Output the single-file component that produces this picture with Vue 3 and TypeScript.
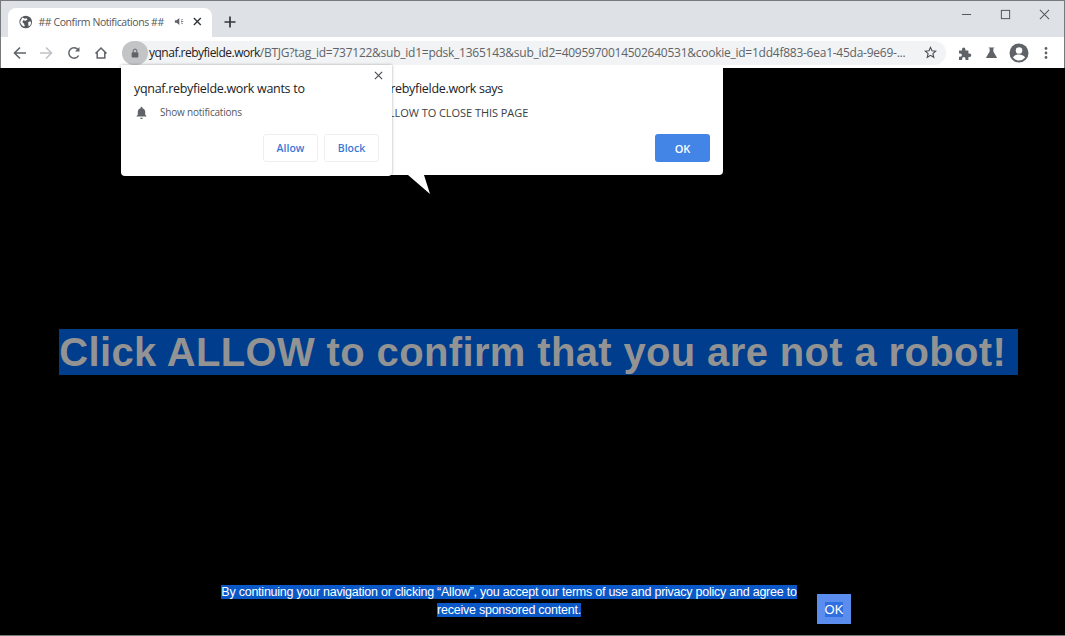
<script setup lang="ts">
const url = {
  host: 'yqnaf.rebyfielde.work',
  rest: '/BTJG?tag_id=737122&sub_id1=pdsk_1365143&sub_id2=4095970014502640531&cookie_id=1dd4f883-6ea1-45da-9e69-...'
}
</script>

<template>
  <div class="window">
    <header class="tabstrip">
      <div class="tab">
        <svg class="globe" viewBox="0 0 16 16" width="14" height="14"><circle cx="8" cy="8" r="7.5" fill="#54585d"/><path d="M4 2.500l3 1.500 2-.5 1 1.500-2 1.500-3-.5-1 2 2 2 1 3-1.500.5C3 12 1.500 10 1.500 7.500zM11 8l2.500-1 1 1.500-1 3.500-2 1.500-.5-3z" fill="#fff"/></svg>
        <span class="tab-title">## Confirm Notifications ##</span>
        <svg class="speaker" viewBox="0 0 12 12" width="11" height="11"><path d="M1 4.500h2L6 2v8L3 7.500H1z" fill="#5f6368"/><path d="M8 4.500l2-1M8 6h2.500M8 7.500l2 1" stroke="#5f6368" stroke-width=".9"/></svg>
        <svg class="tab-x" viewBox="0 0 10 10" width="9" height="9"><path d="M1 1l8 8M9 1l-8 8" stroke="#33363a" stroke-width="1.600"/></svg>
      </div>
      <svg class="new-tab" viewBox="0 0 12 12" width="12" height="12"><path d="M6 .5v11M.5 6h11" stroke="#33363a" stroke-width="1.700"/></svg>
      <div class="window-controls">
        <svg viewBox="0 0 12 12" width="11" height="11"><path d="M1 6h10" stroke="#55585c" stroke-width="1.100"/></svg>
        <svg viewBox="0 0 12 12" width="11" height="11"><rect x="1.500" y="1.500" width="9" height="9" fill="none" stroke="#55585c" stroke-width="1.100"/></svg>
        <svg viewBox="0 0 12 12" width="11" height="11"><path d="M1 1l10 10M11 1L1 11" stroke="#55585c" stroke-width="1.100"/></svg>
      </div>
    </header>

    <nav class="toolbar">
      <svg class="nav-back" viewBox="0 0 14 14" width="14" height="14"><path d="M13 7H2M7 1.500L1.500 7 7 12.500" fill="none" stroke="#5f6368" stroke-width="1.600"/></svg>
      <svg class="nav-fwd" viewBox="0 0 14 14" width="14" height="14"><path d="M1 7h11M7 1.500L12.500 7 7 12.500" fill="none" stroke="#c0c3c7" stroke-width="1.600"/></svg>
      <svg class="nav-reload" viewBox="0 0 14 14" width="14" height="14"><path d="M11.600 9.500A5.200 5.200 0 1 1 11 3.600" fill="none" stroke="#5f6368" stroke-width="1.500"/><path d="M12.500 1v4.500H8z" fill="#5f6368"/></svg>
      <svg class="nav-home" viewBox="0 0 14 14" width="14" height="14"><path d="M1.500 7.500L7 2l5.500 5.500M3.200 6.500V12h7.600V6.500" fill="none" stroke="#5f6368" stroke-width="1.500"/></svg>
      <div class="omnibox">
        <span class="lock">
          <svg viewBox="0 0 12 12" width="10" height="10"><rect x="2" y="5" width="8" height="6.500" rx="1" fill="#5f6368"/><path d="M3.800 5V3.500a2.200 2.200 0 0 1 4.400 0V5" fill="none" stroke="#5f6368" stroke-width="1.200"/></svg>
        </span>
        <span class="url"><span class="host">{{ url.host }}</span>{{ url.rest }}</span>
        <svg class="star" viewBox="0 0 14 14" width="13" height="13"><path d="M7 1.500l1.600 3.700 4 .4-3 2.600.9 3.900L7 10l-3.500 2.100.9-3.900-3-2.600 4-.4z" fill="none" stroke="#4a4d51" stroke-width="1.200"/></svg>
      </div>
      <svg class="ext" viewBox="0 0 14 14" width="14" height="14"><path d="M1 4.500h3V3.300a1.700 1.700 0 0 1 3.400 0v1.200h3v3h1.200a1.700 1.700 0 0 1 0 3.400h-1.200V14H7.500v-1.300a1.700 1.700 0 0 0-3.400 0V14H1v-3.200h1.200a1.700 1.700 0 0 0 0-3.400H1z" fill="#5f6368"/></svg>
      <svg class="flask" viewBox="0 0 14 14" width="13" height="13"><path d="M4 1.500h6v1H9v3.500l3.800 6.500v.5H1.200v-.5L5 6V2.500H4z" fill="#5f6368"/></svg>
      <svg class="avatar" viewBox="0 0 20 20" width="20" height="20"><circle cx="10" cy="10" r="9.500" fill="#5f6368"/><circle cx="10" cy="7.500" r="3.300" fill="#fff"/><path d="M3.900 14.500c1.500-2.400 3.800-3.100 6.100-3.100s4.600.7 6.100 3.100A8 8 0 0 1 10 17.500a8 8 0 0 1-6.100-3z" fill="#fff"/></svg>
      <svg class="menu" viewBox="0 0 4 14" width="4" height="14"><circle cx="2" cy="2.500" r="1.400" fill="#5f6368"/><circle cx="2" cy="7" r="1.400" fill="#5f6368"/><circle cx="2" cy="11.500" r="1.400" fill="#5f6368"/></svg>
    </nav>

    <main class="page">
      <h1 class="headline"><span>Click ALLOW to confirm that you are not a robot!&nbsp;</span></h1>
      <div class="consent">
        <p class="consent-text"><span>By continuing your navigation or clicking “Allow”, you accept our terms of use and privacy policy and agree to receive sponsored content.</span></p>
        <button class="consent-ok" type="button"><span>OK</span></button>
      </div>

      <section class="alert">
        <div class="alert-title">yqnaf.rebyfielde.work says</div>
        <div class="alert-msg">CLICK ALLOW TO CLOSE THIS PAGE</div>
        <div class="alert-actions"><button class="alert-ok" type="button">OK</button></div>
      </section>
      <div class="tail"></div>

      <section class="perm">
        <svg class="perm-x" viewBox="0 0 10 10" width="9" height="9"><path d="M1 1l8 8M9 1l-8 8" stroke="#4a4d51" stroke-width="1.300"/></svg>
        <div class="perm-title">yqnaf.rebyfielde.work wants to</div>
        <div class="perm-row">
          <svg viewBox="0 0 14 14" width="13" height="13"><path d="M7 .8c.6 0 1 .4 1 1v.5c1.900.5 3 2 3 4v3l1.300 1.400v.6H1.700v-.6L3 9.300v-3c0-2 1.100-3.500 3-4v-.5c0-.6.400-1 1-1zM5.600 12.700h2.800a1.400 1.400 0 0 1-2.800 0z" fill="#5f6368"/></svg>
          <span>Show notifications</span>
        </div>
        <div class="perm-actions">
          <button type="button">Allow</button>
          <button type="button">Block</button>
        </div>
      </section>
    </main>
  </div>
</template>

<style>
html, body { margin: 0; background: #000; overflow: hidden; }
</style>

<style scoped>
.window {
  width: 1065px;
  height: 636px;
  display: flex;
  flex-direction: column;
  overflow: hidden;
  font-family: "Open Sans", "Noto Sans", sans-serif;
}
.tabstrip {
  height: 36px;
  flex: none;
  background: #dee1e6;
  border-top: 1px solid #77797c;
  border-left: 1px solid #77797c;
  border-right: 1px solid #77797c;
  display: flex;
  align-items: flex-end;
  padding-left: 7px;
}
.tab {
  width: 204px;
  height: 29px;
  box-sizing: border-box;
  background: #fff;
  border-radius: 8px 8px 0 0;
  display: flex;
  align-items: center;
  padding: 0 10px 2px 11px;
  color: #55585c;
  font-size: 10.500px;
}
.tab-title { margin-left: 6px; white-space: nowrap; letter-spacing: -.42px; width: 126px; }
.speaker { margin-left: 10px; }
.tab-x { margin-left: 9px; }
.new-tab { margin: 0 0 9px 12px; }
.window-controls {
  margin-left: auto;
  align-self: flex-start;
  display: flex;
  gap: 28px;
  padding: 8px 14px 0 0;
}
.toolbar {
  height: 31px;
  flex: none;
  background: #fff;
  border-left: 1px solid #77797c;
  border-right: 1px solid #77797c;
  display: flex;
  align-items: center;
  padding-left: 12px;
}
.nav-fwd { margin-left: 12px; }
.nav-reload { margin-left: 14px; }
.nav-home { margin-left: 13px; }
.omnibox {
  margin-left: 14px;
  width: 824px;
  height: 24px;
  flex: none;
  box-sizing: border-box;
  background: #f1f3f4;
  border-radius: 12px;
  display: flex;
  align-items: center;
  padding-right: 9px;
  font-size: 12px;
  color: #5f6368;
}
.lock {
  width: 26px;
  height: 24px;
  flex: none;
  border-radius: 12px;
  background: #c2c4c6;
  display: flex;
  align-items: center;
  justify-content: center;
}
.url { margin-left: 1px; white-space: nowrap; letter-spacing: -.25px; }
.host { color: #202124; letter-spacing: -.5px; }
.star { margin-left: auto; }
.ext { margin-left: 12px; }
.flask { margin-left: 13px; }
.avatar { margin-left: 11px; }
.menu { margin-left: 15px; }
.page {
  position: relative;
  flex: 1;
  min-height: 0;
  background: #000;
  border-bottom: 1px solid #77797c;
  display: flex;
  flex-direction: column;
  align-items: center;
}
.headline {
  margin: 261px 0 0 12px;
  font: bold 40px/46px "Liberation Sans", Arial, sans-serif;
  letter-spacing: .36px;
  white-space: nowrap;
  color: #939393;
}
.headline span { background: #003d8c; display: block; }
.consent {
  margin-top: auto;
  display: flex;
  align-items: flex-end;
  gap: 13px;
  padding-bottom: 11px;
}
.consent-text {
  width: 590px;
  margin: 0 0 5px;
  text-align: center;
  font: 12.500px/18px "Liberation Sans", Arial, sans-serif;
  letter-spacing: -.24px;
  color: #fff;
}
.consent-text span { background: #0a58c8; }
.consent-ok {
  width: 34px;
  height: 30px;
  padding: 0;
  border: 0;
  background: #5b8def;
  color: #fff;
  font: 13px "Liberation Sans", Arial, sans-serif;
}
.consent-ok span { background: #2f6fe0; }
.alert {
  position: absolute;
  left: 329px;
  top: -2px;
  width: 394px;
  height: 109px;
  box-sizing: border-box;
  background: #fff;
  border-radius: 0 0 4px 4px;
  padding: 14px 13px 13px;
  color: #202124;
}
.alert-title { font-size: 12.500px; line-height: 18px; letter-spacing: -.3px; margin-left: 14px; white-space: nowrap; }
.alert-msg { font-size: 11px; line-height: 16px; margin-top: 7px; margin-left: 8px; white-space: nowrap; letter-spacing: -.05px; color: #3c4043; }
.alert-actions { display: flex; justify-content: flex-end; margin-top: 13px; }
.alert-ok {
  width: 55px;
  height: 28px;
  border: 0;
  border-radius: 3px;
  background: #4285e6;
  color: #fff;
  font: 600 11px "Open Sans", sans-serif;
}
.tail {
  position: absolute;
  left: 408px;
  top: 107px;
  width: 22px;
  height: 19px;
  background: #fff;
  clip-path: polygon(0 0, 16px 0, 100% 100%);
}
.perm {
  position: absolute;
  left: 121px;
  top: -3px;
  width: 271px;
  height: 111px;
  box-sizing: border-box;
  background: #fff;
  border-radius: 0 0 4px 4px;
  padding: 15px 13px 0;
  box-shadow: 0 0 3px rgba(0,0,0,.35);
}
.perm-x { position: absolute; right: 9px; top: 6px; }
.perm-title { font-size: 12.500px; line-height: 18px; letter-spacing: -.3px; color: #202124; white-space: nowrap; }
.perm-row {
  display: flex;
  align-items: center;
  gap: 12px;
  margin-top: 5px;
  height: 18px;
  padding-left: 1px;
  font-size: 10px;
  letter-spacing: -.2px;
  color: #55585c;
}
.perm-actions {
  display: flex;
  justify-content: flex-end;
  gap: 6px;
  margin-top: 13px;
}
.perm-actions button {
  width: 55px;
  height: 28px;
  padding: 0;
  background: #fff;
  border: 1px solid #eceef0;
  border-radius: 3px;
  color: #3a78d6;
  font: 600 10.500px "Open Sans", sans-serif;
}
</style>
